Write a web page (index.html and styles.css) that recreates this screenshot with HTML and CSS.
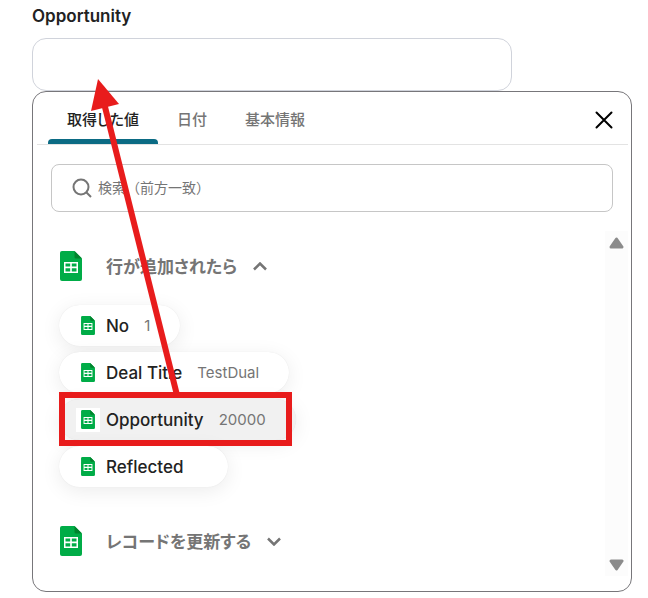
FILE: index.html
```html
<!DOCTYPE html>
<html lang="ja">
  <head>
    <meta charset="UTF-8">
    <meta name="viewport" content="width=device-width, initial-scale=1">
    <title>Opportunity</title>
    <link rel="stylesheet" href="styles.css">
  </head>
  <body>
    <svg width="0" height="0" class="defs" aria-hidden="true">
      <symbol id="sheet" viewBox="0 0 22 30">
        <path d="M2 0h12.500l7.500 7.500V28a2 2 0 0 1-2 2H2a2 2 0 0 1-2-2V2a2 2 0 0 1 2-2z" fill="#00ac47"/>
        <path d="M14.500 0L22 7.500h-6a1.500 1.500 0 0 1-1.500-1.500z" fill="#00832d"/>
        <path d="M4 11h14v11H4zM5.500 12.500v3h4.700v-3zM11.800 12.500v3h4.700v-3zM5.500 17.300v3.200h4.700v-3.200zM11.800 17.300v3.200h4.700v-3.200z" fill="#fff" fill-rule="evenodd"/>
      </symbol>
    </svg>
    <div class="field">
      <label class="field-label" for="opportunity">Opportunity</label>
      <input class="field-input" id="opportunity" type="text">
      <div class="panel">
        <div class="tabs">
          <button type="button" class="tab active">取得した値</button>
          <button type="button" class="tab">日付</button>
          <button type="button" class="tab">基本情報</button>
          <button type="button" class="close" aria-label="閉じる">
            <svg width="18" height="18" viewBox="0 0 18 18"><path d="M1.500 1.500l15 15M16.500 1.500l-15 15"/></svg>
          </button>
        </div>
        <div class="search">
          <svg width="20" height="20" viewBox="0 0 20 20"><circle cx="9" cy="9" r="7.500"/><path d="M14.500 14.500l4.500 4.500"/></svg>
          <input type="search" placeholder="検索（前方一致）" aria-label="検索（前方一致）">
        </div>
        <div class="body">
          <div class="list">
            <button type="button" class="group">
              <svg class="group-icon"><use href="#sheet"/></svg>
              <span>行が追加されたら</span>
              <svg class="chevron" viewBox="0 0 14 9"><path d="M1 7.500l6-6L13 7.500"/></svg>
            </button>
            <div class="items">
              <button type="button" class="item">
                <span class="item-icon"><svg><use href="#sheet"/></svg></span>
                <span class="item-name">No</span>
                <span class="item-value">1</span>
              </button>
              <button type="button" class="item">
                <span class="item-icon"><svg><use href="#sheet"/></svg></span>
                <span class="item-name">Deal Title</span>
                <span class="item-value">TestDual</span>
              </button>
              <button type="button" class="item selected">
                <span class="item-icon"><svg><use href="#sheet"/></svg></span>
                <span class="item-name">Opportunity</span>
                <span class="item-value">20000</span>
              </button>
              <button type="button" class="item">
                <span class="item-icon"><svg><use href="#sheet"/></svg></span>
                <span class="item-name">Reflected</span>
                <span class="item-value"></span>
              </button>
            </div>
            <button type="button" class="group">
              <svg class="group-icon"><use href="#sheet"/></svg>
              <span>レコードを更新する</span>
              <svg class="chevron" viewBox="0 0 14 9"><path d="M1 1.500l6 6L13 1.500"/></svg>
            </button>
          </div>
          <div class="scrollbar">
            <svg width="15" height="12" viewBox="0 0 15 12"><path d="M7.500 2L13 10H2z"/></svg>
            <svg width="15" height="12" viewBox="0 0 15 12"><path d="M7.500 10L13 2H2z"/></svg>
          </div>
        </div>
      </div>
      <!-- 選択項目から入力欄への矢印 -->
      <svg class="guide" width="270" height="380" viewBox="0 0 270 380" aria-hidden="true">
        <path class="guide-line" d="M72 24L145 316"/>
        <path class="guide-head" d="M66 0L87 25L59 32z"/>
        <rect class="guide-line" x="30" y="316" width="227" height="48"/>
      </svg>
    </div>
  </body>
</html>
```
FILE: styles.css
```css
* {
  box-sizing: border-box;
}
body {
  font-family: Inter, 'Noto Sans CJK JP', sans-serif;
  margin: 0;
  padding: 4px 16px 7px 32px;
  background-color: #fff;
  color: #222;
}
button, input {
  font-family: inherit;
  color: inherit;
}
button {
  border: none;
  background: none;
  padding: 0;
  cursor: pointer;
}
svg {
  display: block;
  flex: none;
}
.defs {
  position: absolute;
}
.field {
  position: relative;
}
.field-label {
  display: block;
  margin-bottom: 10px;
  font-size: 17px;
  line-height: 24px;
  font-weight: 600;
}
.field-input {
  display: block;
  width: 80%;
  height: 53px;
  padding: 0 16px;
  border: 1px solid #d0d3db;
  border-radius: 14px;
  font-size: 16px;
}
.panel {
  border: 1px solid #77767a;
  border-radius: 14px;
  padding: 0 3px 15px 4px;
}
.tabs {
  display: flex;
  height: 53px;
  padding: 0 15px 0 11px;
  border-bottom: 1px solid #e3e3e3;
}
.tab {
  padding: 1px 19px 0;
  border-radius: 4px 4px 0 0;
  font-size: 15px;
  font-weight: 500;
  font-feature-settings: "palt";
  color: #757575;
}
.tab.active {
  position: relative;
  color: #222;
}
.tab.active::after {
  content: '';
  position: absolute;
  left: 0;
  right: 0;
  bottom: 0;
  height: 5px;
  border-radius: 4px 4px 0 0;
  background: #0b6b84;
}
.close {
  margin-left: auto;
  padding-top: 4px;
}
.close path {
  fill: none;
  stroke: #000;
  stroke-width: 2;
  stroke-linecap: round;
}
.search {
  display: flex;
  align-items: center;
  gap: 6px;
  height: 48px;
  margin: 19px 15px 0 14px;
  padding: 0 20px;
  border: 1px solid #c6c6c6;
  border-radius: 8px;
}
.search svg {
  fill: none;
  stroke: #757575;
  stroke-width: 2;
}
.search input {
  flex: 1;
  min-width: 0;
  padding: 0 0 2px;
  border: none;
  outline: none;
  background: none;
  font-size: 14px;
}
.search input::placeholder {
  color: #757575;
}
.body {
  display: flex;
  margin-top: 19px;
}
.list {
  flex: 1;
  padding: 15px 22px;
}
.group {
  display: flex;
  align-items: center;
  height: 40px;
  padding-left: 1px;
  font-size: 17px;
  font-weight: 700;
  font-feature-settings: "palt";
  color: #757575;
}
.group span {
  padding-bottom: 2px;
}
.group-icon {
  width: 22px;
  height: 30px;
  margin-right: 24px;
}
.chevron {
  width: 14px;
  height: 9px;
  margin-left: 16px;
  fill: none;
  stroke: #757575;
  stroke-width: 2.5;
}
.items {
  display: flex;
  flex-direction: column;
  align-items: flex-start;
  gap: 6px;
  padding: 19px 0 34px;
}
.item {
  display: flex;
  align-items: center;
  height: 41px;
  padding: 0 30px 0 17px;
  border-radius: 21px;
  background: #fff;
  box-shadow: 0 4px 20px rgba(0, 0, 0, 0.08), 0 0 1px rgba(0, 0, 0, 0.1);
}
.item.selected {
  background: #f1f1f1;
}
.item-icon {
  display: flex;
  align-items: center;
  justify-content: center;
  width: 24px;
  height: 24px;
  margin-right: 6px;
  background: #fff;
}
.item-icon svg {
  width: 14px;
  height: 19px;
}
.item-name {
  margin-right: 15px;
  font-size: 17px;
  font-weight: 500;
}
.item-value {
  font-size: 15px;
  color: #757575;
}
.scrollbar {
  display: flex;
  flex-direction: column;
  align-items: center;
  justify-content: space-between;
  width: 23px;
  padding: 6px 0 5px;
  background: #fcfcfc;
}
.scrollbar path {
  fill: #8b8b8b;
  stroke: #8b8b8b;
  stroke-width: 3;
  stroke-linejoin: round;
}
.guide {
  position: absolute;
  top: 75px;
  left: 0;
  pointer-events: none;
}
.guide-line {
  fill: none;
  stroke: #e81c1c;
  stroke-width: 6;
}
.guide-head {
  fill: #e81c1c;
}
```
